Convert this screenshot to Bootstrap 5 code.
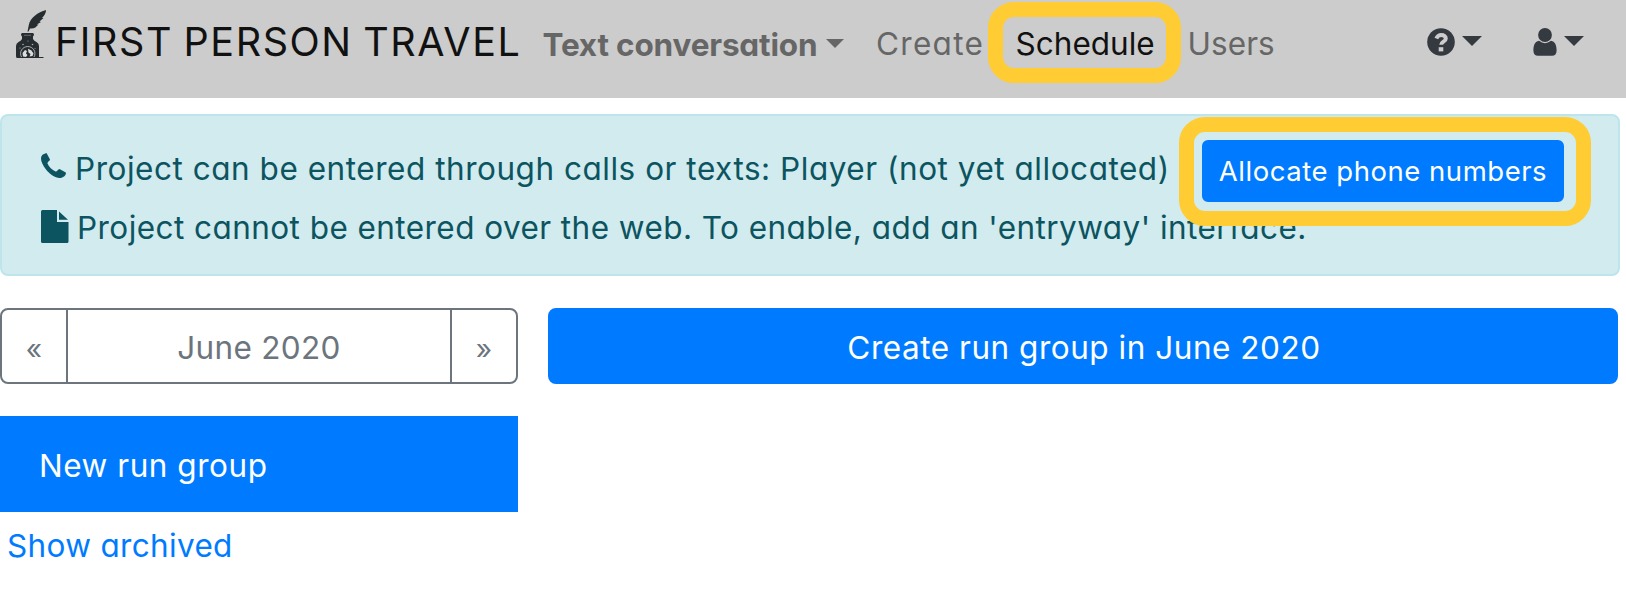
<!DOCTYPE html>
<html lang="en">
<head>
<meta charset="utf-8">
<title>Schedule</title>
<link href="https://cdn.jsdelivr.net/npm/bootstrap@5.3.0/dist/css/bootstrap.min.css" rel="stylesheet">
<style>
body{font-family:Inter,"Liberation Sans",sans-serif;font-feature-settings:"cv11";font-size:31.5px;line-height:1.5;letter-spacing:.53px;overflow:hidden;background:#fff}
.topbar{height:98px;background:#ccc;padding:0 0 14px 16px;flex-wrap:nowrap;justify-content:flex-start}
.logo{width:30px;height:48px;margin:0 9px 16px 0}
.brandname{font-size:39.5px;letter-spacing:1.55px;word-spacing:-2px;color:#111;margin:0;padding:2px 0 0;width:487.5px}
.project{font-weight:700;color:#666;padding-top:6px;width:333.5px;letter-spacing:-.17px}
.caret{display:inline-block;border:10px solid transparent;border-top-color:currentColor;border-bottom:0}
.caret-sm{border-width:9.5px 9px 0;margin:0 0 4px 9px}
.toplink{color:#666;text-decoration:none;position:relative;padding-top:3px}
.toplink.active{color:#111;letter-spacing:0;width:172px}
.link-create{letter-spacing:1.3px;width:139.6px}
.link-users{letter-spacing:.05px;width:239.4px}
.callout-ring{position:absolute;border:15px solid #fc3;border-radius:26px;pointer-events:none}
.ring-nav{left:-28px;top:-15px;width:193px;height:81px}
.ring-btn{left:-23.5px;top:-23.5px;width:412px;height:109px}
.tools{color:#343a40}
.tools .caret{margin:0 0 2px 7px}
.person{margin-left:51px}
.info{width:1620px;height:162px;margin:16px 0 32px;padding:24px 39px;background:#d1ebef;border:2px solid #bee5eb;border-radius:8px;color:#0c5460}
.line1{width:1161px;height:57px}
.phone{margin:0 9px 6px 0}
.line2{height:51px;letter-spacing:.44px}
.file{margin:0 8px 2px 0}
.btn{--bs-btn-font-size:31.5px;--bs-btn-border-radius:8px;letter-spacing:inherit;border-width:2px;padding:3px 0 0;height:76px}
.btn-primary{--bs-btn-bg:#007bff;--bs-btn-border-color:#007bff}
.btn-outline-secondary{--bs-btn-color:#6c757d;--bs-btn-border-color:#6c757d}
.allocate{height:62px;width:362px;font-size:27.5px;border-radius:6px;display:block;padding:1px 0 0}
.month{width:518px;letter-spacing:.3px}
.btn-group.month>.btn+.btn{margin-left:-2px!important}
.month .step{flex:0 0 68px;font-size:28px;padding-top:5px}
.create{width:1070px;margin-left:30px;padding-left:2px}
.groups{width:518px;margin-top:32px}
.group-item{height:96px;background:#007bff;color:#fff;padding:3px 0 0 39px}
.archived{color:#007bff;text-decoration:none;padding:1px 0 0 7px;height:66px;letter-spacing:.33px}
</style>
<script src="https://cdn.jsdelivr.net/npm/bootstrap@5.3.0/dist/js/bootstrap.bundle.min.js"></script>
</head>
<body>
<nav class="navbar topbar">
  <svg class="logo flex-shrink-0" viewBox="0 0 30 48">
    <path fill="#262c30" d="M30 0C22 2 14 8 12.800 15L11.500 21.500H12.500L14 18.500C18.500 19 20 17 22.500 14.500L20.800 14.500L25 12L23.500 11.500L27.500 8L26 8Q30 4 30 0ZM6 23H17Q19 24.500 17 26.500V29Q18 31 20.500 32Q23 33.500 23 36V47H27.500V48H1Q0 48 0 46V36Q0 33.500 2.500 32Q5 31 6 29V26.500Q4 24.500 6 23Z"/>
    <path d="M8 25.300h7" stroke="#85898b" stroke-width=".7"/>
    <path d="M5.500 47A7.200 7 0 1 1 18 47" fill="#262c30" stroke="#b8bbbb" stroke-width=".9"/>
    <path fill="#dcdede" d="M6.500 43L9 40L11 41L10 43.500L11.500 45L10 47L7 46.500ZM12 38.800L15.500 40.500L17.500 43.500L16.500 46L13.500 46.500L14.500 44L12.500 42.500Z"/>
    <g fill="#a6aaab"><circle cx="7" cy="34.500" r=".8"/><circle cx="12" cy="31" r=".6"/><circle cx="16.500" cy="34.500" r=".8"/><circle cx="4" cy="38" r=".6"/><circle cx="19" cy="38.500" r=".5"/></g>
  </svg>
  <span class="navbar-brand brandname flex-shrink-0 text-nowrap">FIRST PERSON TRAVEL</span>
  <div class="project d-flex align-items-center flex-shrink-0 text-nowrap"><span>Text conversation</span><span class="caret caret-sm"></span></div>
  <div class="d-flex flex-shrink-0 text-nowrap align-items-center">
    <a class="toplink link-create">Create</a>
    <a class="toplink active">Schedule<span class="callout-ring ring-nav"></span></a>
    <a class="toplink link-users">Users</a>
  </div>
  <div class="tools d-flex align-items-center flex-shrink-0">
    <svg width="28" height="28" viewBox="0 0 28 28"><circle cx="14" cy="14" r="13.800" fill="#343a40"/><path d="M9.300 10.500C10.500 7.800 12.200 7 14.300 7C17 7 18.800 8.500 18.800 10.500C18.800 13.800 14.200 13.600 14.200 16.800" fill="none" stroke="#ccc" stroke-width="4"/><path d="M11.700 19.200h4.600v4.200h-4.600z" fill="#ccc"/></svg>
    <span class="caret"></span>
    <svg class="person" width="24" height="28" viewBox="0 0 24 28"><circle cx="12" cy="7" r="6.900" fill="#343a40"/><path fill="#343a40" d="M6 12.800Q12 17.500 18 12.800C22 13.500 23.600 17 23.600 22.500C23.600 26 22 27.700 19 27.700H5C2 27.700.4 26 .4 22.500C.4 17 2 13.500 6 12.800Z"/></svg>
    <span class="caret"></span>
  </div>
</nav>
<div class="info">
  <div class="d-flex">
    <div class="line1 d-flex align-items-center text-nowrap">
      <svg class="phone" width="25" height="25" viewBox="0 0 25 25"><path fill="#0c5460" d="M3 1L5.500 0L9 6.500C9 8 6 9 6.500 10.500C8 14 11 17 14.500 18.500C16 19 17 16 18.500 16L24.800 19.500C25.500 21.500 23 24.500 19.500 24.900C15 25.500 9 21.500 5 16.500C1.500 12 0 8 0 5.500C0 3 1.500 1.500 3 1Z"/></svg>
      <span>Project can be entered through calls or texts: Player (not yet allocated)</span>
    </div>
    <div class="position-relative"><button class="btn btn-primary allocate text-nowrap">Allocate phone numbers</button><span class="callout-ring ring-btn"></span></div>
  </div>
  <div class="line2 d-flex align-items-center text-nowrap">
    <svg class="file" width="28" height="33" viewBox="0 0 28 33"><path fill="#0c5460" d="M1.500 0H16V12H27.500V31.500Q27.500 33 26 33H1.500Q0 33 0 31.500V1.500Q0 0 1.500 0ZM18 1.500L27 9.800H18Z"/></svg>
    <span>Project cannot be entered over the web. To enable, add an 'entryway' interface.</span>
  </div>
</div>
<div class="d-flex">
  <div class="month btn-group">
    <button class="btn btn-outline-secondary step">«</button>
    <button class="btn btn-outline-secondary">June 2020</button>
    <button class="btn btn-outline-secondary step">»</button>
  </div>
  <button class="btn btn-primary create">Create run group in June 2020</button>
</div>
<div class="groups">
  <div class="group-item d-flex align-items-center">New run group</div>
  <a class="archived d-flex align-items-center">Show archived</a>
</div>
</body>
</html>
